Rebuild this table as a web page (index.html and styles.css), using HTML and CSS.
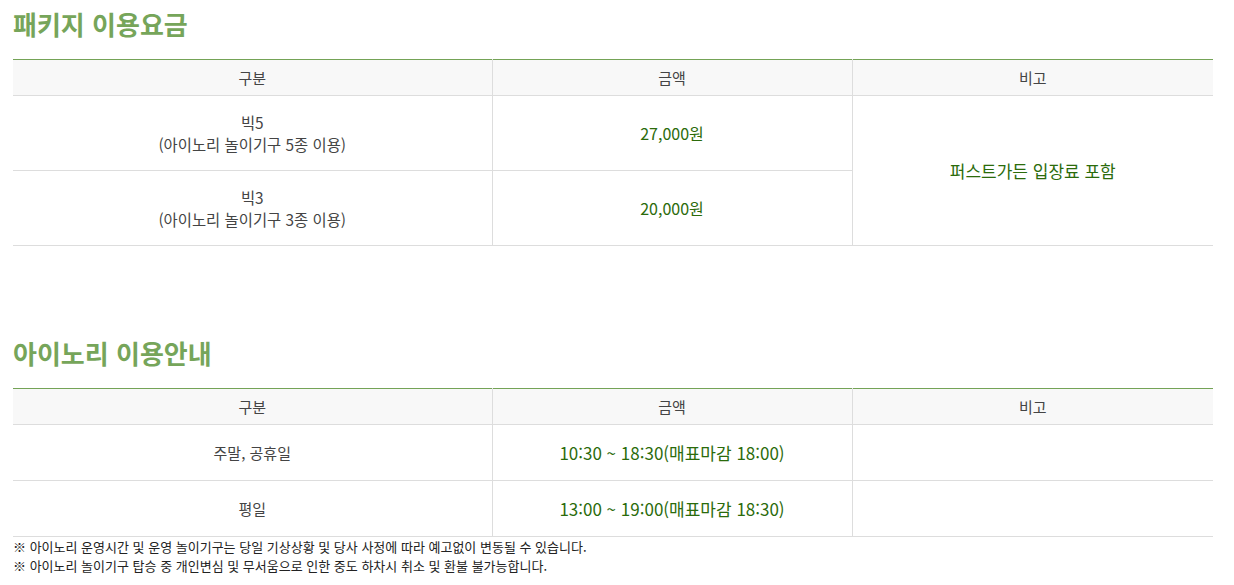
FILE: index.html
```html
<!DOCTYPE html>
<html lang="ko">
<head>
<meta charset="utf-8">
<title>이용요금</title>
<link rel="stylesheet" href="styles.css">
</head>
<body>
<div class="wrap">
  <section class="block">
    <h2 class="title">패키지 이용요금</h2>
    <table class="tbl tbl-pack">
      <colgroup><col class="c1"><col class="c2"><col class="c3"></colgroup>
      <thead>
        <tr><th>구분</th><th>금액</th><th>비고</th></tr>
      </thead>
      <tbody>
        <tr>
          <td class="name">빅5<br>(아이노리 놀이기구 5종 이용)</td>
          <td class="green">27,000원</td>
          <td class="green big" rowspan="2">퍼스트가든 입장료 포함</td>
        </tr>
        <tr>
          <td class="name">빅3<br>(아이노리 놀이기구 3종 이용)</td>
          <td class="green">20,000원</td>
        </tr>
      </tbody>
    </table>
  </section>

  <section class="block block-second">
    <h2 class="title">아이노리 이용안내</h2>
    <table class="tbl tbl-info">
      <colgroup><col class="c1"><col class="c2"><col class="c3"></colgroup>
      <thead>
        <tr><th>구분</th><th>금액</th><th>비고</th></tr>
      </thead>
      <tbody>
        <tr>
          <td>주말, 공휴일</td>
          <td class="green big">10:30 ~ 18:30(매표마감 18:00)</td>
          <td></td>
        </tr>
        <tr>
          <td>평일</td>
          <td class="green big">13:00 ~ 19:00(매표마감 18:30)</td>
          <td></td>
        </tr>
      </tbody>
    </table>
    <ul class="notes">
      <li>※ 아이노리 운영시간 및 운영 놀이기구는 당일 기상상황 및 당사 사정에 따라 예고없이 변동될 수 있습니다.</li>
      <li>※ 아이노리 놀이기구 탑승 중 개인변심 및 무서움으로 인한 중도 하차시 취소 및 환불 불가능합니다.</li>
    </ul>
  </section>
</div>
</body>
</html>
```

FILE: styles.css
```css
* { box-sizing: border-box; }
html, body { margin: 0; padding: 0; background: #fff; }
body {
  font-family: "Noto Sans CJK KR", "Noto Sans", sans-serif;
  color: #444;
}
.wrap {
  width: 1200px;
  margin-left: 13px;
  padding-top: 7px;
}
.title {
  margin: 0 0 18px 0;
  font-size: 26px;
  line-height: 34px;
  font-weight: 700;
  color: #76a55a;
}
.block-second { margin-top: 90px; }
.block-second .title { margin-bottom: 18px; }

.tbl {
  width: 1200px;
  border-collapse: collapse;
  table-layout: fixed;
  border-top: 1px solid #74a356;
}
.c1 { width: 479px; }
.c2 { width: 360px; }
.c3 { width: 361px; }
.tbl th, .tbl td {
  border: 1px solid #dddddd;
  text-align: center;
  vertical-align: middle;
  font-size: 15px;
  color: #444;
  padding: 0;
}
.tbl th:first-child, .tbl td:first-child { border-left: none; }
.tbl th:last-child, .tbl td:last-child { border-right: none; }
.tbl thead th {
  border-top: none;
  background: #f8f8f8;
  font-weight: 400;
  height: 36px;
  line-height: 20px;
}
.tbl-pack tbody td {
  height: 75px;
  line-height: 22px;
}
.tbl td.name { font-size: 15.4px; }
.tbl-info tbody td {
  height: 56px;
  line-height: 22px;
}
.tbl td.green {
  color: #2b6b0b;
  font-size: 16px;
}
.tbl td.green.big { font-size: 17px; }
.notes {
  list-style: none;
  margin: 0;
  padding: 0;
  font-size: 13px;
  line-height: 19px;
  color: #222;
}
```
